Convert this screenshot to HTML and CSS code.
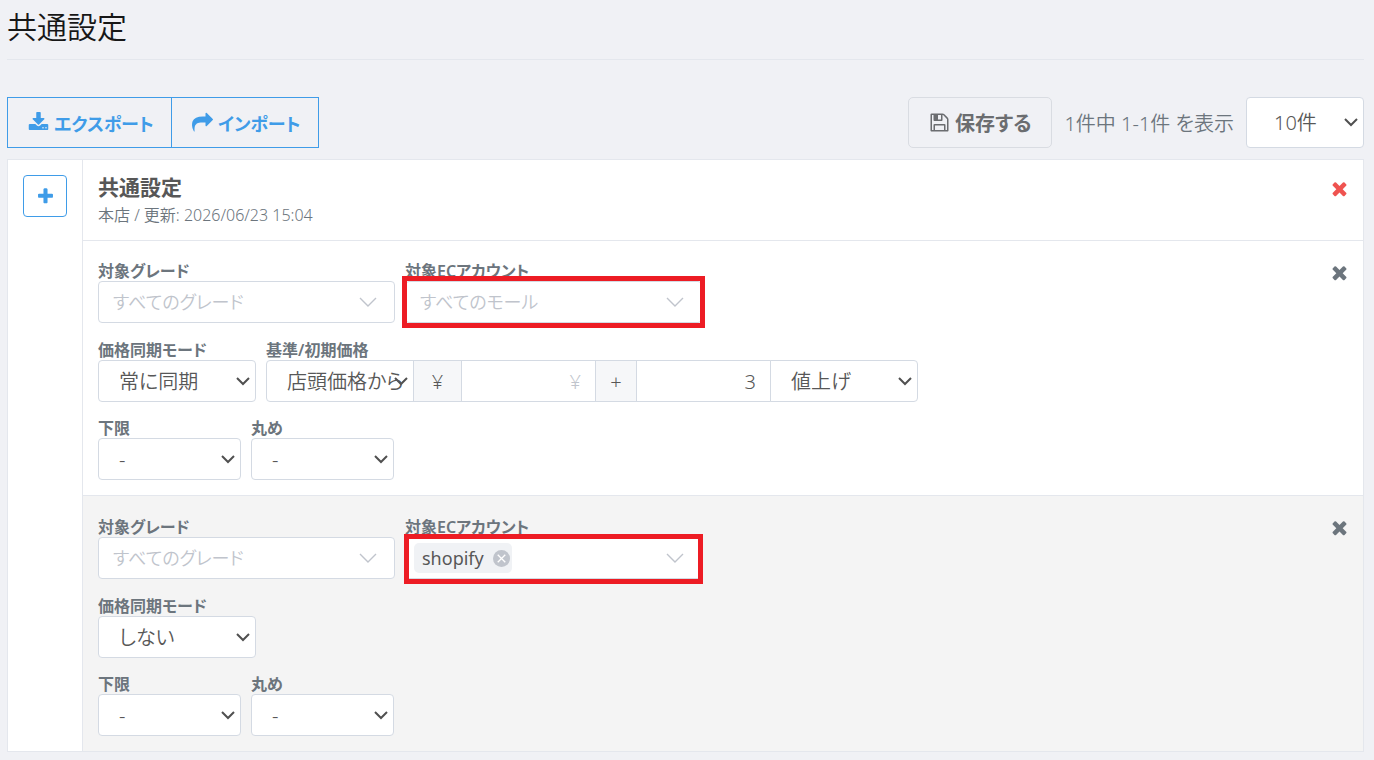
FILE: index.html
```html
<!DOCTYPE html>
<html lang="ja">
<head>
    <meta charset="UTF-8">
    <meta name="viewport" content="width=device-width, initial-scale=1.0">
    <title>共通設定</title>
    <link rel="stylesheet" href="styles.css">
</head>
<body>
    <svg class="symbols" aria-hidden="true">
        <symbol id="i-download" viewBox="0 0 1792 1792"><path d="M1344 1344q0-26-19-45t-45-19-45 19-19 45 19 45 45 19 45-19 19-45zm256 0q0-26-19-45t-45-19-45 19-19 45 19 45 45 19 45-19 19-45zm128-224v320q0 40-28 68t-68 28h-1472q-40 0-68-28t-28-68v-320q0-40 28-68t68-28h465l135 136q58 56 136 56t136-56l136-136h464q40 0 68 28t28 68zm-325-569q17 41-14 70l-448 448q-18 19-45 19t-45-19l-448-448q-31-29-14-70 17-39 59-39h256v-448q0-26 19-45t45-19h256q26 0 45 19t19 45v448h256q42 0 59 39z"/></symbol>
        <symbol id="i-share" viewBox="0 0 1792 1792"><path d="M1792 640q0 26-19 45l-512 512q-19 19-45 19t-45-19-19-45v-256h-224q-98 0-175.5 6t-154 21.5-133 42.5-105.5 69.5-80 101-48.5 138.5-17.5 181q0 55 5 123 0 6 2.5 23.5t2.5 26.5q0 15-8.5 25t-23.5 10q-16 0-28-17-7-9-13-22t-13.5-30-10.5-24q-127-285-127-451 0-199 53-333 162-403 875-403h224v-256q0-26 19-45t45-19 45 19l512 512q19 19 19 45z"/></symbol>
        <symbol id="i-save" viewBox="0 0 1792 1792"><path d="M512 1536h768v-384h-768v384zm896 0h128v-896q0-14-10-38.5t-20-34.5l-281-281q-10-10-34-20t-39-10v416q0 40-28 68t-68 28h-576q-40 0-68-28t-28-68v-416h-128v1280h128v-416q0-40 28-68t68-28h832q40 0 68 28t28 68v416zm-384-928v-320q0-13-9.5-22.5t-22.5-9.5h-192q-13 0-22.5 9.5t-9.5 22.5v320q0 13 9.5 22.5t22.5 9.5h192q13 0 22.5-9.5t9.5-22.5zm640 32v928q0 40-28 68t-68 28h-1344q-40 0-68-28t-28-68v-1344q0-40 28-68t68-28h928q40 0 88 20t76 48l280 280q28 28 48 76t20 88z"/></symbol>
        <symbol id="i-plus" viewBox="0 0 1792 1792"><path d="M1600 736v192q0 40-28 68t-68 28h-416v416q0 40-28 68t-68 28h-192q-40 0-68-28t-28-68v-416h-416q-40 0-68-28t-28-68v-192q0-40 28-68t68-28h416v-416q0-40 28-68t68-28h192q40 0 68 28t28 68v416h416q40 0 68 28t28 68z"/></symbol>
        <symbol id="i-times" viewBox="0 0 1792 1792"><path d="M1490 1322q0 40-28 68l-136 136q-28 28-68 28t-68-28l-294-294-294 294q-28 28-68 28t-68-28l-136-136q-28-28-28-68t28-68l294-294-294-294q-28-28-28-68t28-68l136-136q28-28 68-28t68 28l294 294 294-294q28-28 68-28t68 28l136 136q28 28 28 68t-28 68l-294 294 294 294q28 28 28 68z"/></symbol>
        <symbol id="i-angle" viewBox="0 0 18 18"><path d="M1 5l8 8 8-8" fill="none" stroke="currentColor" stroke-width="1.4"/></symbol>
        <symbol id="i-clear" viewBox="0 0 18 18"><circle cx="9" cy="9" r="9"/><path d="M5 5l8 8m0-8l-8 8" stroke="#fff" stroke-width="1.4"/></symbol>
    </svg>

    <h1 class="page-title">共通設定</h1>

    <div class="toolbar">
        <div class="btn-group">
            <button type="button" class="btn btn-primary"><svg class="icon"><use href="#i-download"/></svg>エクスポート</button>
            <button type="button" class="btn btn-primary"><svg class="icon"><use href="#i-share"/></svg>インポート</button>
        </div>
        <div class="toolbar-right">
            <button type="button" class="btn btn-save"><svg class="icon"><use href="#i-save"/></svg>保存する</button>
            <span class="count">1件中 1-1件 を表示</span>
            <select class="control page-size" aria-label="表示件数">
                <option>10件</option>
            </select>
        </div>
    </div>

    <div class="card">
        <div class="card-side">
            <button type="button" class="btn-add" aria-label="追加"><svg class="icon"><use href="#i-plus"/></svg></button>
        </div>
        <div class="card-main">
            <div class="card-head">
                <div>
                    <h2>共通設定</h2>
                    <p>本店 / 更新: 2026/06/23 15:04</p>
                </div>
                <button type="button" class="btn-close danger" aria-label="削除"><svg class="icon"><use href="#i-times"/></svg></button>
            </div>

            <div class="rule">
                <div class="rule-form">
                    <div class="row row-target">
                        <div class="field wide">
                            <label for="grade1">対象グレード</label>
                            <div class="control multi">
                                <input type="text" id="grade1" placeholder="すべてのグレード">
                                <svg class="angle"><use href="#i-angle"/></svg>
                            </div>
                        </div>
                        <div class="field wide">
                            <label for="ec1">対象ECアカウント</label>
                            <div class="control multi marked">
                                <input type="text" id="ec1" placeholder="すべてのモール">
                                <svg class="angle"><use href="#i-angle"/></svg>
                            </div>
                        </div>
                    </div>
                    <div class="row">
                        <div class="field mode">
                            <label for="mode1">価格同期モード</label>
                            <select class="control" id="mode1"><option>常に同期</option></select>
                        </div>
                        <div class="field">
                            <label for="base1">基準/初期価格</label>
                            <div class="input-group">
                                <select class="control base" id="base1"><option>店頭価格から</option></select>
                                <span class="control addon yen">¥</span>
                                <input type="text" class="control number" placeholder="¥" aria-label="価格">
                                <span class="control addon">+</span>
                                <input type="text" class="control number" value="3" aria-label="増減">
                                <select class="control base" aria-label="増減の方向"><option>値上げ</option></select>
                            </div>
                        </div>
                    </div>
                    <div class="row">
                        <div class="field small">
                            <label for="min1">下限</label>
                            <select class="control" id="min1"><option>-</option></select>
                        </div>
                        <div class="field small">
                            <label for="round1">丸め</label>
                            <select class="control" id="round1"><option>-</option></select>
                        </div>
                    </div>
                </div>
                <button type="button" class="btn-close" aria-label="削除"><svg class="icon"><use href="#i-times"/></svg></button>
            </div>

            <div class="rule alt">
                <div class="rule-form">
                    <div class="row row-target">
                        <div class="field wide">
                            <label for="grade2">対象グレード</label>
                            <div class="control multi">
                                <input type="text" id="grade2" placeholder="すべてのグレード">
                                <svg class="angle"><use href="#i-angle"/></svg>
                            </div>
                        </div>
                        <div class="field wide">
                            <label for="ec2">対象ECアカウント</label>
                            <div class="control multi marked tight">
                                <span class="tag">shopify<button type="button" aria-label="shopifyを外す"><svg><use href="#i-clear"/></svg></button></span>
                                <input type="text" id="ec2">
                                <svg class="angle"><use href="#i-angle"/></svg>
                            </div>
                        </div>
                    </div>
                    <div class="row">
                        <div class="field mode">
                            <label for="mode2">価格同期モード</label>
                            <select class="control" id="mode2"><option>しない</option></select>
                        </div>
                    </div>
                    <div class="row">
                        <div class="field small">
                            <label for="min2">下限</label>
                            <select class="control" id="min2"><option>-</option></select>
                        </div>
                        <div class="field small">
                            <label for="round2">丸め</label>
                            <select class="control" id="round2"><option>-</option></select>
                        </div>
                    </div>
                </div>
                <button type="button" class="btn-close" aria-label="削除"><svg class="icon"><use href="#i-times"/></svg></button>
            </div>
        </div>
    </div>
</body>
</html>
```

FILE: styles.css
```css
* {
    box-sizing: border-box;
}
body {
    margin: 0;
    padding: 0 10px 8px 7px;
    background-color: #f0f1f5;
    color: #575757;
    font-family: "Noto Sans", "Noto Sans CJK JP", sans-serif;
    font-size: 20px;
    font-weight: 350;
    font-feature-settings: "palt";
}
button, input, select {
    font: inherit;
    font-feature-settings: inherit;
    color: inherit;
}
button {
    cursor: pointer;
}
h1, h2, p {
    margin: 0;
}
.symbols {
    display: none;
}
.icon {
    width: 21px;
    height: 21px;
    fill: currentColor;
    flex: none;
}
.page-title {
    padding: 6px 0 11px;
    border-bottom: 1px solid #e4e7ed;
    color: #171717;
    font-size: 30px;
    font-weight: 350;
    line-height: 42px;
}

/* toolbar */
.toolbar {
    display: flex;
    justify-content: space-between;
    margin: 37px 0 11px;
}
.toolbar-right {
    display: flex;
    align-items: center;
    gap: 12px;
}
.btn-group {
    display: flex;
}
.btn {
    display: flex;
    align-items: center;
    gap: 5px;
    height: 51px;
    padding: 0 20px;
    background: none;
    border: 1px solid #3f9ce8;
    font-weight: 600;
}
.btn-primary {
    padding-right: 17px;
    color: #3f9ce8;
    font-size: 18px;
}
.btn-primary + .btn-primary {
    margin-left: -1px;
}
.btn-save {
    border-color: #d9dce2;
    border-radius: 5px;
    color: #6b6d70;
}
.count {
    color: #6c757d;
}

/* form controls */
.control {
    display: block;
    width: 100%;
    height: 42px;
    background-color: #fff;
    border: 1px solid #d4dae3;
    border-radius: 4px;
}
select.control {
    appearance: none;
    padding: 0 10px 0 20px;
    background-image: url("data:image/svg+xml,%3Csvg xmlns='http://www.w3.org/2000/svg' width='14' height='9'%3E%3Cpath d='M1 1l6 6 6-6' fill='none' stroke='%23505050' stroke-width='2'/%3E%3C/svg%3E");
    background-repeat: no-repeat;
    background-position: right 5px center;
}
select.page-size {
    width: 118px;
    height: 51px;
    padding-left: 27px;
}
.field label {
    display: block;
    color: #6c757d;
    font-size: 16px;
    font-weight: 600;
    line-height: 20px;
}
.wide {
    width: 297px;
}
.mode {
    width: 158px;
}
.small {
    width: 143px;
}
.multi {
    position: relative;
    display: flex;
    align-items: center;
    padding: 0 17px 0 14px;
}
.multi input {
    flex: 1;
    min-width: 0;
    padding: 0;
    border: none;
    outline: none;
    background: none;
    font-size: 18px;
}
::placeholder {
    color: #c0c4cc;
    opacity: 1;
}
.angle {
    width: 18px;
    height: 18px;
    color: #c0c4cc;
}
.marked::after {
    content: "";
    position: absolute;
    inset: -6px -4px;
    border: 5px solid #ed1c24;
    pointer-events: none;
}
.tight {
    padding-left: 8px;
}
.tight::after {
    inset: -4px -2px -6px -2px;
}
.tag {
    display: flex;
    align-items: center;
    gap: 9px;
    height: 30px;
    padding: 0 2px 0 8px;
    background-color: #f0f2f5;
    border-radius: 5px;
    font-size: 18px;
    font-weight: 400;
}
.tag button {
    display: flex;
    padding: 0;
    border: none;
    background: none;
}
.tag svg {
    width: 17px;
    height: 17px;
    fill: #c0c4cc;
}
.input-group {
    display: flex;
}
.input-group .control {
    margin-left: -1px;
    border-radius: 0;
}
.input-group .control:first-child {
    margin-left: 0;
    border-radius: 4px 0 0 4px;
}
.input-group .control:last-child {
    border-radius: 0 4px 4px 0;
}
.input-group .base {
    width: 148px;
}
.input-group .number {
    width: 135px;
    padding: 0 14px;
    text-align: right;
}
.input-group .addon {
    display: flex;
    align-items: center;
    justify-content: center;
    width: 42px;
    background-color: #f6f7f9;
}
.input-group .yen {
    width: 49px;
}

/* card */
.card {
    display: flex;
    background-color: #fff;
    border: 1px solid #e4e7ed;
}
.card-side {
    width: 75px;
    padding: 15px;
    border-right: 1px solid #e4e7ed;
}
.btn-add {
    display: flex;
    align-items: center;
    justify-content: center;
    width: 44px;
    height: 42px;
    padding: 0;
    background: none;
    border: 1px solid #3f9ce8;
    border-radius: 4px;
    color: #3f9ce8;
}
.btn-add .icon {
    width: 19px;
    height: 19px;
}
.card-main {
    flex: 1;
}
.card-head {
    display: flex;
    justify-content: space-between;
    padding: 13px 13px 12px 15px;
}
.card-head h2 {
    margin-bottom: 2px;
    font-size: 21px;
    font-weight: 600;
    line-height: 28px;
}
.card-head p {
    color: #6c757d;
    font-size: 16px;
    line-height: 25px;
}
.btn-close {
    align-self: flex-start;
    display: flex;
    padding: 1px 0;
    background: none;
    border: none;
    color: #6c757d;
}
.btn-close.danger {
    padding-top: 5px;
    color: #ef5350;
}
.rule {
    display: flex;
    justify-content: space-between;
    padding: 20px 13px 15px 15px;
    border-top: 1px solid #e4e7ed;
}
.rule.alt {
    padding-top: 21px;
    background-color: #f4f4f4;
}
.rule.alt .btn-close {
    padding-top: 0;
}
.row {
    display: flex;
    flex-wrap: wrap;
    gap: 10px;
    margin-top: 16px;
}
.row-target {
    margin-top: 0;
    margin-bottom: 17px;
}
.row-target + .row {
    margin-top: 0;
}
```
